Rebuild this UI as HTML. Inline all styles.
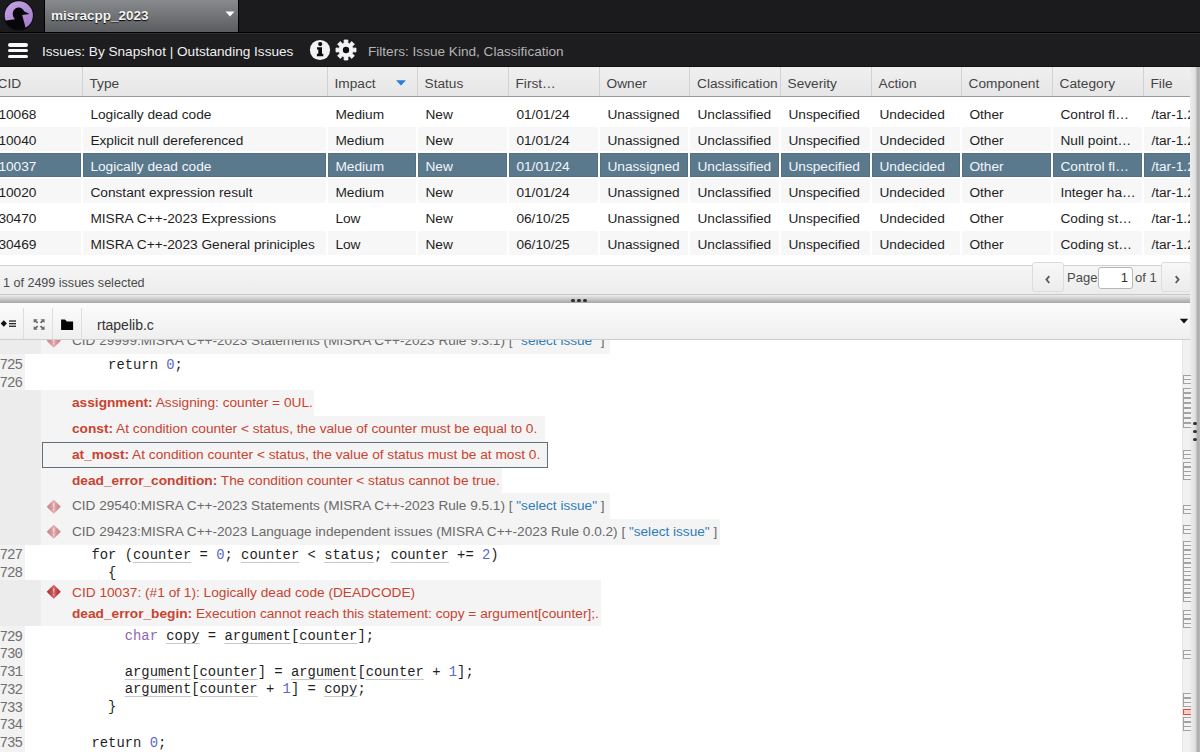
<!DOCTYPE html>
<html><head><meta charset="utf-8">
<style>
*{box-sizing:border-box;margin:0;padding:0}
html,body{width:1200px;height:752px;overflow:hidden;background:#fff;font-family:"Liberation Sans",sans-serif;position:relative}
.abs{position:absolute}
#top{left:0;top:0;width:1200px;height:33px;background:#1b1b1e;border-bottom:1px solid #000}
#sel{left:44px;top:0;width:195px;height:32px;background:linear-gradient(#898a8e,#5b5c60);border-left:1px solid #000;border-right:1px solid #000}
#sel span{position:absolute;left:6px;top:7.6px;font-weight:bold;font-size:13.5px;color:#f4f4f4;text-shadow:0 1px 1px #000}
#bar2{left:0;top:33px;width:1200px;height:34px;background:#1d1d20;border-top:1px solid #2c2c2f;border-bottom:1px solid #111}
.t2{position:absolute;font-size:13.6px;color:#f0f0f0;white-space:pre}
#hdr{left:0;top:67px;width:1190px;height:30px;background:linear-gradient(#f0f0f0,#e6e6e6);border-bottom:1px solid #9a9a9a}
.hc{position:absolute;top:0;height:29px;border-left:1px solid #d2d2d2;font-size:13.7px;color:#444;line-height:33px;padding-left:6.5px;white-space:pre;overflow:hidden}
.row{position:absolute;left:0;width:1190px;height:26px}
.c{position:absolute;top:0;height:26px;font-size:13.7px;color:#1e1e1e;padding-left:7.4px;line-height:28px;white-space:pre;overflow:hidden;border-left:1px solid #fff;border-right:1px solid #fff;border-top:1px solid #fff;border-bottom:1px solid #fff}
.alt .c{background:#f7f7f7}
.selr .c{background:#5b798d;color:#f2f6fa;box-shadow:inset 0 0 0 1px #55717f}

.cl{position:absolute;left:0;width:1182px;height:17.72px}
.ln{position:absolute;left:-0.5px;top:0;width:25px;height:17.72px;font-family:"Liberation Mono",monospace;font-size:14.2px;letter-spacing:-1.02px;line-height:17.72px;padding-top:2.3px;color:#707070;white-space:pre}
.ct{position:absolute;top:0;font-family:"Liberation Mono",monospace;font-size:13.85px;line-height:17.72px;padding-top:1.8px;color:#1f1f1f;white-space:pre}
.ct .u{text-decoration:underline;text-decoration-color:#c6c6c6;text-underline-offset:3px;text-decoration-thickness:1.2px}
.ct .n{color:#5a67c8}
.ct .k{color:#9066b0}
.evr{position:absolute;left:0;width:41px;background:#ececec}
.ev{position:absolute;left:41px;background:#f4f4f4}
.evt{position:absolute;left:72px;font-size:13.7px;color:#c94330;white-space:pre}
.evt b{font-weight:bold}
.evt.evgt{color:#6a6a6a;font-size:13.6px}
.lk{color:#2f7cb8}
</style></head><body>
<!-- top bar -->
<div id="top" class="abs"></div>
<svg class="abs" style="left:0;top:0" width="40" height="32" viewBox="0 0 40 32">
 <defs><clipPath id="lc"><circle cx="18.8" cy="15.4" r="14.6"/></clipPath>
 <linearGradient id="lg" x1="0" y1="0" x2="0.6" y2="1"><stop offset="0" stop-color="#c2a6e2"/><stop offset="1" stop-color="#a77ccc"/></linearGradient></defs>
 <circle cx="18.8" cy="15.4" r="15.2" fill="#0d0b12"/>
 <circle cx="18.8" cy="15.4" r="14.1" fill="url(#lg)"/>
 <path clip-path="url(#lc)" fill="#08060a" d="M3 20.9 L15 19.3 C13.2 17.5 12.4 14.7 12.9 12.3 C13.7 8.9 17 6.9 20.2 7.7 C22.1 8.2 23.4 9.7 24.4 11.4 L29.6 13.9 L22.2 15.1 C23.2 19.1 24.4 23.5 25.8 28.6 L26 34 L0 34 Z"/>
</svg>
<div id="sel" class="abs"><span>misracpp_2023</span>
 <svg class="abs" style="left:180px;top:11px" width="10" height="6" viewBox="0 0 10 6"><path d="M0.5 0.5 L9.5 0.5 L5 5.5 Z" fill="#fff"/></svg>
</div>
<div id="bar2" class="abs">
 <div class="abs" style="left:8px;top:9.2px;width:20px;height:3.4px;border-radius:2px;background:#fafafa"></div>
 <div class="abs" style="left:8px;top:14.9px;width:20px;height:3.4px;border-radius:2px;background:#fafafa"></div>
 <div class="abs" style="left:8px;top:20.6px;width:20px;height:3.4px;border-radius:2px;background:#fafafa"></div>
 <div class="t2" style="left:42px;top:10px">Issues: By Snapshot | Outstanding Issues</div>
 <svg class="abs" style="left:309px;top:5px" width="22" height="22" viewBox="0 0 22 22">
  <circle cx="11" cy="11" r="10.1" fill="#f2f2f2"/>
  <circle cx="11.2" cy="5.1" r="2.1" fill="#0c0c0c"/>
  <path d="M8 8.2 H13 V14.8 H14.3 V17.2 H7.9 V14.8 H9.3 V10.5 H8 Z" fill="#0c0c0c"/>
 </svg>
 <svg class="abs" style="left:335px;top:5px" width="22" height="22" viewBox="0 0 22 22">
  <path d="M9.13 4.25 L9.05 0.99 L12.95 0.99 L12.87 4.25 L14.45 4.91 L16.70 2.54 L19.46 5.30 L17.09 7.55 L17.75 9.13 L21.01 9.05 L21.01 12.95 L17.75 12.87 L17.09 14.45 L19.46 16.70 L16.70 19.46 L14.45 17.09 L12.87 17.75 L12.95 21.01 L9.05 21.01 L9.13 17.75 L7.55 17.09 L5.30 19.46 L2.54 16.70 L4.91 14.45 L4.25 12.87 L0.99 12.95 L0.99 9.05 L4.25 9.13 L4.91 7.55 L2.54 5.30 L5.30 2.54 L7.55 4.91 Z" fill="#f4f4f4" stroke="#f4f4f4" stroke-width="0.8" stroke-linejoin="round"/>
  <circle cx="11" cy="11" r="3.2" fill="#101012"/>
 </svg>
 <div class="t2" style="left:368px;top:10px;color:#b4b4b4">Filters: Issue Kind, Classification</div>
</div>
<!-- TABLE -->
<div id="hdr" class="abs">
 <div class="hc" style="left:-9px;width:91px;border-left:none">CID</div>
 <div class="hc" style="left:82px;width:245px">Type</div>
 <div class="hc" style="left:327px;width:90px">Impact</div>
 <svg class="abs" style="left:396px;top:13px" width="10" height="6" viewBox="0 0 10 6"><path d="M0 0.3 H10 L5 5.6 Z" fill="#2a7fd4"/></svg>
 <div class="hc" style="left:417px;width:91px">Status</div>
 <div class="hc" style="left:508px;width:91px">First…</div>
 <div class="hc" style="left:599px;width:90px">Owner</div>
 <div class="hc" style="left:689px;width:91px;padding-left:7px">Classification</div>
 <div class="hc" style="left:780px;width:91px">Severity</div>
 <div class="hc" style="left:871px;width:90px">Action</div>
 <div class="hc" style="left:961px;width:91px">Component</div>
 <div class="hc" style="left:1052px;width:91px">Category</div>
 <div class="hc" style="left:1143px;width:47px;text-overflow:clip">File</div>
</div>
<div id="rows">
<div class="row" style="top:100px;overflow:hidden">
 <div class="c" style="left:-9px;width:91px;border-left:none">10068</div>
 <div class="c" style="left:82px;width:245px">Logically dead code</div>
 <div class="c" style="left:327px;width:90px">Medium</div>
 <div class="c" style="left:417px;width:91px">New</div>
 <div class="c" style="left:508px;width:91px">01/01/24</div>
 <div class="c" style="left:599px;width:90px">Unassigned</div>
 <div class="c" style="left:689px;width:91px">Unclassified</div>
 <div class="c" style="left:780px;width:91px">Unspecified</div>
 <div class="c" style="left:871px;width:90px">Undecided</div>
 <div class="c" style="left:961px;width:91px">Other</div>
 <div class="c" style="left:1052px;width:91px">Control fl…</div>
 <div class="c" style="left:1143px;width:80px">/tar-1.2</div>
</div>
<div class="row alt" style="top:126px;overflow:hidden">
 <div class="c" style="left:-9px;width:91px;border-left:none">10040</div>
 <div class="c" style="left:82px;width:245px">Explicit null dereferenced</div>
 <div class="c" style="left:327px;width:90px">Medium</div>
 <div class="c" style="left:417px;width:91px">New</div>
 <div class="c" style="left:508px;width:91px">01/01/24</div>
 <div class="c" style="left:599px;width:90px">Unassigned</div>
 <div class="c" style="left:689px;width:91px">Unclassified</div>
 <div class="c" style="left:780px;width:91px">Unspecified</div>
 <div class="c" style="left:871px;width:90px">Undecided</div>
 <div class="c" style="left:961px;width:91px">Other</div>
 <div class="c" style="left:1052px;width:91px">Null point…</div>
 <div class="c" style="left:1143px;width:80px">/tar-1.2</div>
</div>
<div class="row selr" style="top:152px;overflow:hidden">
 <div class="c" style="left:-9px;width:91px;border-left:none">10037</div>
 <div class="c" style="left:82px;width:245px">Logically dead code</div>
 <div class="c" style="left:327px;width:90px">Medium</div>
 <div class="c" style="left:417px;width:91px">New</div>
 <div class="c" style="left:508px;width:91px">01/01/24</div>
 <div class="c" style="left:599px;width:90px">Unassigned</div>
 <div class="c" style="left:689px;width:91px">Unclassified</div>
 <div class="c" style="left:780px;width:91px">Unspecified</div>
 <div class="c" style="left:871px;width:90px">Undecided</div>
 <div class="c" style="left:961px;width:91px">Other</div>
 <div class="c" style="left:1052px;width:91px">Control fl…</div>
 <div class="c" style="left:1143px;width:80px">/tar-1.2</div>
</div>
<div class="row alt" style="top:178px;overflow:hidden">
 <div class="c" style="left:-9px;width:91px;border-left:none">10020</div>
 <div class="c" style="left:82px;width:245px">Constant expression result</div>
 <div class="c" style="left:327px;width:90px">Medium</div>
 <div class="c" style="left:417px;width:91px">New</div>
 <div class="c" style="left:508px;width:91px">01/01/24</div>
 <div class="c" style="left:599px;width:90px">Unassigned</div>
 <div class="c" style="left:689px;width:91px">Unclassified</div>
 <div class="c" style="left:780px;width:91px">Unspecified</div>
 <div class="c" style="left:871px;width:90px">Undecided</div>
 <div class="c" style="left:961px;width:91px">Other</div>
 <div class="c" style="left:1052px;width:91px">Integer ha…</div>
 <div class="c" style="left:1143px;width:80px">/tar-1.2</div>
</div>
<div class="row" style="top:204px;overflow:hidden">
 <div class="c" style="left:-9px;width:91px;border-left:none">30470</div>
 <div class="c" style="left:82px;width:245px">MISRA C++-2023 Expressions</div>
 <div class="c" style="left:327px;width:90px">Low</div>
 <div class="c" style="left:417px;width:91px">New</div>
 <div class="c" style="left:508px;width:91px">06/10/25</div>
 <div class="c" style="left:599px;width:90px">Unassigned</div>
 <div class="c" style="left:689px;width:91px">Unclassified</div>
 <div class="c" style="left:780px;width:91px">Unspecified</div>
 <div class="c" style="left:871px;width:90px">Undecided</div>
 <div class="c" style="left:961px;width:91px">Other</div>
 <div class="c" style="left:1052px;width:91px">Coding st…</div>
 <div class="c" style="left:1143px;width:80px">/tar-1.2</div>
</div>
<div class="row alt" style="top:230px;overflow:hidden">
 <div class="c" style="left:-9px;width:91px;border-left:none">30469</div>
 <div class="c" style="left:82px;width:245px">MISRA C++-2023 General priniciples</div>
 <div class="c" style="left:327px;width:90px">Low</div>
 <div class="c" style="left:417px;width:91px">New</div>
 <div class="c" style="left:508px;width:91px">06/10/25</div>
 <div class="c" style="left:599px;width:90px">Unassigned</div>
 <div class="c" style="left:689px;width:91px">Unclassified</div>
 <div class="c" style="left:780px;width:91px">Unspecified</div>
 <div class="c" style="left:871px;width:90px">Undecided</div>
 <div class="c" style="left:961px;width:91px">Other</div>
 <div class="c" style="left:1052px;width:91px">Coding st…</div>
 <div class="c" style="left:1143px;width:80px">/tar-1.2</div>
</div>
</div><!--/rows-->

<!-- FOOTER -->
<div class="abs" style="left:0;top:256px;width:1190px;height:9px;background:#fff"></div>
<div class="abs" style="left:0;top:265px;width:1190px;height:30px;background:linear-gradient(#f6f6f6,#ececec);border-top:1px solid #d0d0d0;border-bottom:1px solid #c8c8c8"></div>
<div class="abs" style="left:3px;top:276px;font-size:12.55px;color:#4a4a4a;white-space:pre">1 of 2499 issues selected</div>
<div class="abs" style="left:1032px;top:262px;width:32px;height:30px;border:1px solid #dcdcdc;border-radius:3px;background:linear-gradient(#f8f8f8,#ececec)"></div>
<svg class="abs" style="left:1044px;top:274px" width="8" height="11" viewBox="0 0 8 11"><path d="M5.3 2.2 L2.4 5.6 L5.3 9" fill="none" stroke="#5a5a5a" stroke-width="1.8"/></svg>
<div class="abs" style="left:1067px;top:270px;font-size:13px;color:#4a4a4a;white-space:pre">Page</div>
<div class="abs" style="left:1098px;top:267px;width:35px;height:22px;border:1px solid #b8b8b8;border-radius:3px;background:#fff;font-size:13px;color:#333;text-align:right;padding-right:4px;line-height:20px">1</div>
<div class="abs" style="left:1135px;top:270px;font-size:13px;color:#4a4a4a;white-space:pre">of 1</div>
<div class="abs" style="left:1161px;top:262px;width:30px;height:30px;border:1px solid #dcdcdc;border-radius:3px;background:linear-gradient(#f8f8f8,#ececec)"></div>
<svg class="abs" style="left:1173px;top:274px" width="8" height="11" viewBox="0 0 8 11"><path d="M2.7 2.2 L5.6 5.6 L2.7 9" fill="none" stroke="#5a5a5a" stroke-width="1.8"/></svg>
<!-- SPLITTER -->
<div class="abs" style="left:0;top:295px;width:1190px;height:8.5px;background:linear-gradient(#ebebeb,#d2d2d2 35%,#a8a8a8 85%,#a9a9a9)"></div>
<div class="abs" style="left:571.4px;top:298.6px;width:3.3px;height:3.3px;border-radius:2px;background:#2e2e2e"></div>
<div class="abs" style="left:577.4px;top:298.6px;width:3.3px;height:3.3px;border-radius:2px;background:#2e2e2e"></div>
<div class="abs" style="left:583.4px;top:298.6px;width:3.3px;height:3.3px;border-radius:2px;background:#2e2e2e"></div>
<!-- FILE TOOLBAR -->
<div class="abs" style="left:0;top:303px;width:1190px;height:37px;background:linear-gradient(#fcfcfc,#efefef);border-bottom:1px solid #cdcdcd"></div>
<div class="abs" style="left:23px;top:308px;width:1px;height:31px;background:#dedede"></div>
<div class="abs" style="left:52px;top:308px;width:1px;height:31px;background:#dedede"></div>
<div class="abs" style="left:81px;top:308px;width:1px;height:31px;background:#dedede"></div>
<svg class="abs" style="left:0;top:318px" width="18" height="12" viewBox="0 0 18 12">
 <path d="M3.8 2.3 L6.9 5.5 L3.8 8.7 L0.7 5.5 Z" fill="#111"/>
 <rect x="9" y="2.4" width="7" height="1.3" fill="#222"/><rect x="9" y="5" width="7" height="1.3" fill="#222"/><rect x="9" y="7.6" width="7" height="1.3" fill="#222"/>
</svg>
<svg class="abs" style="left:32px;top:318px" width="14" height="13" viewBox="0 0 14 13" fill="#6a6a6a">
 <path d="M1.5 1.2 H5.6 L4.4 2.4 L6.3 4.3 L5 5.6 L3.1 3.7 L1.8 5 Z"/>
 <path d="M12.7 1.2 H8.6 L9.8 2.4 L7.9 4.3 L9.2 5.6 L11.1 3.7 L12.4 5 Z"/>
 <path d="M1.5 11.8 H5.6 L4.4 10.6 L6.3 8.7 L5 7.4 L3.1 9.3 L1.8 8 Z"/>
 <path d="M12.7 11.8 H8.6 L9.8 10.6 L7.9 8.7 L9.2 7.4 L11.1 9.3 L12.4 8 Z"/>
</svg>
<svg class="abs" style="left:60px;top:318px" width="16" height="13" viewBox="0 0 16 13">
 <path d="M1.1 1.4 H5 L6.8 3.6 H13.1 V11.9 H1.1 Z" fill="#050505"/>
</svg>
<div class="abs" style="left:97px;top:317px;font-size:14px;color:#333;white-space:pre">rtapelib.c</div>
<svg class="abs" style="left:1179px;top:318px" width="10" height="7" viewBox="0 0 10 7"><path d="M0.8 0.8 H9.2 L5 5.6 Z" fill="#111"/></svg>
<!-- SCROLLBAR right -->
<div class="abs" style="left:1190px;top:67px;width:10px;height:685px;background:linear-gradient(90deg,#ececec,#e2e2e2 50%,#a8a8a8 80%,#bdbdbd)"></div>
<!-- CODE -->
<div id="code">
<svg width="0" height="0" style="position:absolute"><defs><linearGradient id="dg" x1="0" y1="0" x2="1" y2="0"><stop offset="0" stop-color="#000" stop-opacity="0.08"/><stop offset="0.5" stop-color="#fff" stop-opacity="0.28"/><stop offset="1" stop-color="#000" stop-opacity="0.08"/></linearGradient></defs></svg>
<div id="codebox" class="abs" style="left:0;top:340px;width:1182px;height:412px;overflow:hidden;background:#fff">
<div class="abs" style="left:0;top:0;width:25px;height:412px;background:#f2f2f2"></div>
<div class="evr" style="top:-12.00px;height:26.00px"></div>
<div class="ev evg" style="top:-12.00px;height:26.00px;width:569px"></div>
<svg class="abs" style="left:46.2px;top:-6.8px" width="15.5" height="15.5" viewBox="0 0 14 14"><path d="M7 0.6 L13.4 7 L7 13.4 L0.6 7 Z" fill="#e4969b"/><path d="M7 0.6 L13.4 7 L7 13.4 L0.6 7 Z" fill="url(#dg)"/><path d="M6.3 3.8 H7.7 L7.4 8 H6.6 Z M6.35 9 H7.65 V10.2 H6.35 Z" fill="#fff" opacity="0.55"/></svg>
<div class="evt evgt" style="top:-12.00px;line-height:26.00px">CID 29999:MISRA C++-2023 Statements (MISRA C++-2023 Rule 9.3.1) [ <span class="lk">"select issue"</span> ]</div>
<div class="cl" style="top:15.00px">
 <div class="ln">725</div>
 <div class="ct" style="left:108.12px">return <span class="n">0</span>;</div>
</div>
<div class="cl" style="top:32.72px">
 <div class="ln">726</div>
</div>
<div class="evr" style="top:50.44px;height:25.76px"></div>
<div class="ev" style="top:50.44px;height:25.76px;width:273px"></div>
<div class="evt" style="top:50.44px;line-height:25.76px"><b>assignment:</b> Assigning: counter = 0UL.</div>
<div class="evr" style="top:76.20px;height:25.76px"></div>
<div class="ev" style="top:76.20px;height:25.76px;width:504px"></div>
<div class="evt" style="top:76.20px;line-height:25.76px"><b>const:</b> At condition counter &lt; status, the value of counter must be equal to 0.</div>
<div class="evr" style="top:101.96px;height:25.76px"></div>
<div class="ev" style="top:101.96px;height:25.76px;width:506px"></div>
<div class="abs" style="left:42px;top:102.46px;width:506px;height:25.56px;border:1px solid #5e707b"></div>
<div class="evt" style="top:101.96px;line-height:25.76px"><b>at_most:</b> At condition counter &lt; status, the value of status must be at most 0.</div>
<div class="evr" style="top:127.72px;height:25.76px"></div>
<div class="ev" style="top:127.72px;height:25.76px;width:461px"></div>
<div class="evt" style="top:127.72px;line-height:25.76px"><b>dead_error_condition:</b> The condition counter &lt; status cannot be true.</div>
<div class="evr" style="top:153.48px;height:25.76px"></div>
<div class="ev evg" style="top:153.48px;height:25.76px;width:569px"></div>
<svg class="abs" style="left:46.2px;top:158.6px" width="15.5" height="15.5" viewBox="0 0 14 14"><path d="M7 0.6 L13.4 7 L7 13.4 L0.6 7 Z" fill="#e4969b"/><path d="M7 0.6 L13.4 7 L7 13.4 L0.6 7 Z" fill="url(#dg)"/><path d="M6.3 3.8 H7.7 L7.4 8 H6.6 Z M6.35 9 H7.65 V10.2 H6.35 Z" fill="#fff" opacity="0.55"/></svg>
<div class="evt evgt" style="top:153.48px;line-height:25.76px">CID 29540:MISRA C++-2023 Statements (MISRA C++-2023 Rule 9.5.1) [ <span class="lk">"select issue"</span> ]</div>
<div class="evr" style="top:179.24px;height:25.76px"></div>
<div class="ev evg" style="top:179.24px;height:25.76px;width:679px"></div>
<svg class="abs" style="left:46.2px;top:184.4px" width="15.5" height="15.5" viewBox="0 0 14 14"><path d="M7 0.6 L13.4 7 L7 13.4 L0.6 7 Z" fill="#e4969b"/><path d="M7 0.6 L13.4 7 L7 13.4 L0.6 7 Z" fill="url(#dg)"/><path d="M6.3 3.8 H7.7 L7.4 8 H6.6 Z M6.35 9 H7.65 V10.2 H6.35 Z" fill="#fff" opacity="0.55"/></svg>
<div class="evt evgt" style="top:179.24px;line-height:25.76px">CID 29423:MISRA C++-2023 Language independent issues (MISRA C++-2023 Rule 0.0.2) [ <span class="lk">"select issue"</span> ]</div>
<div class="cl" style="top:205.00px">
 <div class="ln">727</div>
 <div class="ct" style="left:91.50px">for (<span class="u">counter</span> = <span class="n">0</span>; <span class="u">counter</span> &lt; <span class="u">status</span>; <span class="u">counter</span> += <span class="n">2</span>)</div>
</div>
<div class="cl" style="top:222.72px">
 <div class="ln">728</div>
 <div class="ct" style="left:108.12px">{</div>
</div>
<div class="evr" style="top:240.44px;height:46px"></div>
<div class="ev" style="top:240.44px;height:46px;width:560px"></div>
<svg class="abs" style="left:46.2px;top:244.2px" width="15.5" height="15.5" viewBox="0 0 14 14"><path d="M7 0.6 L13.4 7 L7 13.4 L0.6 7 Z" fill="#c9343a"/><path d="M7 0.6 L13.4 7 L7 13.4 L0.6 7 Z" fill="url(#dg)"/><path d="M6.3 3.8 H7.7 L7.4 8 H6.6 Z M6.35 9 H7.65 V10.2 H6.35 Z" fill="#fff" opacity="0.55"/></svg>
<div class="evt" style="top:240.44px;line-height:20.5px;padding-top:3px">CID 10037: (#1 of 1): Logically dead code (DEADCODE)<br><b>dead_error_begin:</b> Execution cannot reach this statement: copy = argument[counter];.</div>
<div class="cl" style="top:286.44px">
 <div class="ln">729</div>
 <div class="ct" style="left:124.74px"><span class="k">char</span> <span class="u">copy</span> = <span class="u">argument</span>[<span class="u">counter</span>];</div>
</div>
<div class="cl" style="top:304.16px">
 <div class="ln">730</div>
</div>
<div class="cl" style="top:321.88px">
 <div class="ln">731</div>
 <div class="ct" style="left:124.74px"><span class="u">argument</span>[<span class="u">counter</span>] = <span class="u">argument</span>[<span class="u">counter</span> + <span class="n">1</span>];</div>
</div>
<div class="cl" style="top:339.60px">
 <div class="ln">732</div>
 <div class="ct" style="left:124.74px"><span class="u">argument</span>[<span class="u">counter</span> + <span class="n">1</span>] = <span class="u">copy</span>;</div>
</div>
<div class="cl" style="top:357.32px">
 <div class="ln">733</div>
 <div class="ct" style="left:108.12px">}</div>
</div>
<div class="cl" style="top:375.04px">
 <div class="ln">734</div>
</div>
<div class="cl" style="top:392.76px">
 <div class="ln">735</div>
 <div class="ct" style="left:91.50px">return <span class="n">0</span>;</div>
</div>
</div>
<div class="abs" style="left:1182px;top:340px;width:8px;height:412px;background:#f1f1f1;border-left:1px solid #e6e6e6"></div>
<div class="abs" style="left:1183px;top:375.0px;width:8px;height:5px;border:1px solid #a2a2a2;border-right:none;background:#f3f3f3"></div>
<div class="abs" style="left:1183px;top:379.3px;width:8px;height:5px;border:1px solid #a2a2a2;border-right:none;background:#f3f3f3"></div>
<div class="abs" style="left:1183px;top:388.0px;width:8px;height:5px;border:1px solid #a2a2a2;border-right:none;background:#f3f3f3"></div>
<div class="abs" style="left:1183px;top:393.0px;width:8px;height:5px;border:1px solid #a2a2a2;border-right:none;background:#f3f3f3"></div>
<div class="abs" style="left:1183px;top:398.0px;width:8px;height:5px;border:1px solid #a2a2a2;border-right:none;background:#f3f3f3"></div>
<div class="abs" style="left:1183px;top:403.0px;width:8px;height:5px;border:1px solid #a2a2a2;border-right:none;background:#f3f3f3"></div>
<div class="abs" style="left:1183px;top:408.0px;width:8px;height:5px;border:1px solid #a2a2a2;border-right:none;background:#f3f3f3"></div>
<div class="abs" style="left:1183px;top:413.0px;width:8px;height:5px;border:1px solid #a2a2a2;border-right:none;background:#f3f3f3"></div>
<div class="abs" style="left:1183px;top:418.0px;width:8px;height:5px;border:1px solid #a2a2a2;border-right:none;background:#f3f3f3"></div>
<div class="abs" style="left:1183px;top:423.0px;width:8px;height:5px;border:1px solid #a2a2a2;border-right:none;background:#f3f3f3"></div>
<div class="abs" style="left:1183px;top:450.0px;width:8px;height:5px;border:1px solid #a2a2a2;border-right:none;background:#f3f3f3"></div>
<div class="abs" style="left:1183px;top:454.3px;width:8px;height:5px;border:1px solid #a2a2a2;border-right:none;background:#f3f3f3"></div>
<div class="abs" style="left:1183px;top:462.3px;width:8px;height:5px;border:1px solid #a2a2a2;border-right:none;background:#f3f3f3"></div>
<div class="abs" style="left:1183px;top:466.6px;width:8px;height:5px;border:1px solid #a2a2a2;border-right:none;background:#f3f3f3"></div>
<div class="abs" style="left:1183px;top:470.9px;width:8px;height:5px;border:1px solid #a2a2a2;border-right:none;background:#f3f3f3"></div>
<div class="abs" style="left:1183px;top:475.2px;width:8px;height:5px;border:1px solid #a2a2a2;border-right:none;background:#f3f3f3"></div>
<div class="abs" style="left:1183px;top:505.0px;width:8px;height:5px;border:1px solid #a2a2a2;border-right:none;background:#f3f3f3"></div>
<div class="abs" style="left:1183px;top:509.3px;width:8px;height:5px;border:1px solid #a2a2a2;border-right:none;background:#f3f3f3"></div>
<div class="abs" style="left:1183px;top:525.0px;width:8px;height:5px;border:1px solid #a2a2a2;border-right:none;background:#f3f3f3"></div>
<div class="abs" style="left:1183px;top:529.3px;width:8px;height:5px;border:1px solid #a2a2a2;border-right:none;background:#f3f3f3"></div>
<div class="abs" style="left:1183px;top:541.0px;width:8px;height:5px;border:1px solid #a2a2a2;border-right:none;background:#f3f3f3"></div>
<div class="abs" style="left:1183px;top:545.3px;width:8px;height:5px;border:1px solid #a2a2a2;border-right:none;background:#f3f3f3"></div>
<div class="abs" style="left:1183px;top:549.6px;width:8px;height:5px;border:1px solid #a2a2a2;border-right:none;background:#f3f3f3"></div>
<div class="abs" style="left:1183px;top:553.9px;width:8px;height:5px;border:1px solid #a2a2a2;border-right:none;background:#f3f3f3"></div>
<div class="abs" style="left:1183px;top:558.2px;width:8px;height:5px;border:1px solid #a2a2a2;border-right:none;background:#f3f3f3"></div>
<div class="abs" style="left:1183px;top:562.5px;width:8px;height:5px;border:1px solid #a2a2a2;border-right:none;background:#f3f3f3"></div>
<div class="abs" style="left:1183px;top:566.8px;width:8px;height:5px;border:1px solid #a2a2a2;border-right:none;background:#f3f3f3"></div>
<div class="abs" style="left:1183px;top:571.1px;width:8px;height:5px;border:1px solid #a2a2a2;border-right:none;background:#f3f3f3"></div>
<div class="abs" style="left:1183px;top:575.4px;width:8px;height:5px;border:1px solid #a2a2a2;border-right:none;background:#f3f3f3"></div>
<div class="abs" style="left:1183px;top:579.7px;width:8px;height:5px;border:1px solid #a2a2a2;border-right:none;background:#f3f3f3"></div>
<div class="abs" style="left:1183px;top:584.0px;width:8px;height:5px;border:1px solid #a2a2a2;border-right:none;background:#f3f3f3"></div>
<div class="abs" style="left:1183px;top:588.3px;width:8px;height:5px;border:1px solid #a2a2a2;border-right:none;background:#f3f3f3"></div>
<div class="abs" style="left:1183px;top:592.6px;width:8px;height:5px;border:1px solid #a2a2a2;border-right:none;background:#f3f3f3"></div>
<div class="abs" style="left:1183px;top:596.9px;width:8px;height:5px;border:1px solid #a2a2a2;border-right:none;background:#f3f3f3"></div>
<div class="abs" style="left:1183px;top:610.0px;width:8px;height:5px;border:1px solid #a2a2a2;border-right:none;background:#f3f3f3"></div>
<div class="abs" style="left:1183px;top:614.3px;width:8px;height:5px;border:1px solid #a2a2a2;border-right:none;background:#f3f3f3"></div>
<div class="abs" style="left:1183px;top:618.6px;width:8px;height:5px;border:1px solid #a2a2a2;border-right:none;background:#f3f3f3"></div>
<div class="abs" style="left:1183px;top:622.9px;width:8px;height:5px;border:1px solid #a2a2a2;border-right:none;background:#f3f3f3"></div>
<div class="abs" style="left:1183px;top:650.0px;width:8px;height:5px;border:1px solid #a2a2a2;border-right:none;background:#f3f3f3"></div>
<div class="abs" style="left:1183px;top:654.3px;width:8px;height:5px;border:1px solid #a2a2a2;border-right:none;background:#f3f3f3"></div>
<div class="abs" style="left:1183px;top:693.4px;width:8px;height:5px;border:1px solid #a2a2a2;border-right:none;background:#f3f3f3"></div>
<div class="abs" style="left:1183px;top:697.7px;width:8px;height:5px;border:1px solid #a2a2a2;border-right:none;background:#f3f3f3"></div>
<div class="abs" style="left:1183px;top:702.0px;width:8px;height:5px;border:1px solid #a2a2a2;border-right:none;background:#f3f3f3"></div>
<div class="abs" style="left:1183px;top:717.4px;width:8px;height:5px;border:1px solid #a2a2a2;border-right:none;background:#f3f3f3"></div>
<div class="abs" style="left:1183px;top:721.7px;width:8px;height:5px;border:1px solid #a2a2a2;border-right:none;background:#f3f3f3"></div>
<div class="abs" style="left:1183px;top:726.0px;width:8px;height:5px;border:1px solid #a2a2a2;border-right:none;background:#f3f3f3"></div>
<div class="abs" style="left:1183px;top:708.5px;width:8px;height:6.5px;border:1.5px solid #d2574a;background:#f7cdbf;border-right:none"></div>
<div class="abs" style="left:1193px;top:421.6px;width:3.6px;height:3.6px;border-radius:2px;background:#333"></div>
<div class="abs" style="left:1193px;top:429.7px;width:3.6px;height:3.6px;border-radius:2px;background:#333"></div>
<div class="abs" style="left:1193px;top:437.5px;width:3.6px;height:3.6px;border-radius:2px;background:#333"></div>
</div><!--/code-->
</body></html>
